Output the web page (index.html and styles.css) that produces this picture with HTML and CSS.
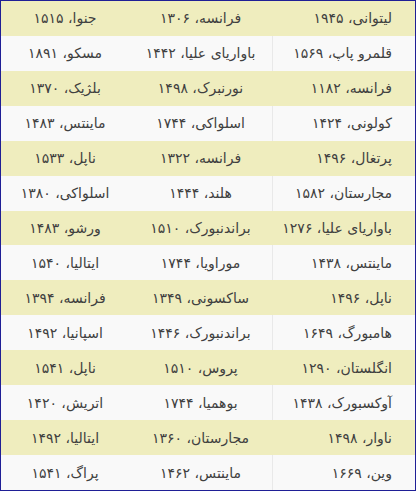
FILE: index.html
```html
<!DOCTYPE html>
<html lang="fa" dir="rtl">
<head>
<meta charset="utf-8">
<link rel="stylesheet" href="styles.css">
</head>
<body>
<div class="table">
  <div class="row odd"><div class="cell first">لیتوانی، ۱۹۴۵</div><div class="cell">فرانسه، ۱۳۰۶</div><div class="cell">جنوا، ۱۵۱۵</div></div>
  <div class="row"><div class="cell first">قلمرو پاپ، ۱۵۶۹</div><div class="cell">باواریای علیا، ۱۴۴۲</div><div class="cell">مسکو، ۱۸۹۱</div></div>
  <div class="row odd"><div class="cell first">فرانسه، ۱۱۸۲</div><div class="cell">نورنبرک، ۱۴۹۸</div><div class="cell">بلژیک، ۱۳۷۰</div></div>
  <div class="row"><div class="cell first">کولونی، ۱۴۲۴</div><div class="cell">اسلواکی، ۱۷۴۴</div><div class="cell">ماینتس، ۱۴۸۳</div></div>
  <div class="row odd"><div class="cell first">پرتغال، ۱۴۹۶</div><div class="cell">فرانسه، ۱۳۲۲</div><div class="cell">ناپل، ۱۵۳۳</div></div>
  <div class="row"><div class="cell first">مجارستان، ۱۵۸۲</div><div class="cell">هلند، ۱۴۴۴</div><div class="cell">اسلواکی، ۱۳۸۰</div></div>
  <div class="row odd"><div class="cell first">باواریای علیا، ۱۲۷۶</div><div class="cell">براندنبورک، ۱۵۱۰</div><div class="cell">ورشو، ۱۴۸۳</div></div>
  <div class="row"><div class="cell first">ماینتس، ۱۴۳۸</div><div class="cell">موراویا، ۱۷۴۴</div><div class="cell">ایتالیا، ۱۵۴۰</div></div>
  <div class="row odd"><div class="cell first">ناپل، ۱۴۹۶</div><div class="cell">ساکسونی، ۱۳۴۹</div><div class="cell">فرانسه، ۱۳۹۴</div></div>
  <div class="row"><div class="cell first">هامبورگ، ۱۶۴۹</div><div class="cell">براندنبورک، ۱۴۴۶</div><div class="cell">اسپانیا، ۱۴۹۲</div></div>
  <div class="row odd"><div class="cell first">انگلستان، ۱۲۹۰</div><div class="cell">پروس، ۱۵۱۰</div><div class="cell">ناپل، ۱۵۴۱</div></div>
  <div class="row"><div class="cell first">آوکسبورک، ۱۴۳۸</div><div class="cell">بوهمیا، ۱۷۴۴</div><div class="cell">اتریش، ۱۴۲۰</div></div>
  <div class="row odd"><div class="cell first">ناوار، ۱۴۹۸</div><div class="cell">مجارستان، ۱۳۶۰</div><div class="cell">ایتالیا، ۱۴۹۲</div></div>
  <div class="row"><div class="cell first">وین، ۱۶۶۹</div><div class="cell">ماینتس، ۱۴۶۲</div><div class="cell">پراگ، ۱۵۴۱</div></div>
</div>
</body>
</html>
```

FILE: styles.css
```css
html, body {
  margin: 0;
  padding: 0;
  background: #ffffff;
}
.table {
  box-sizing: border-box;
  width: 416px;
  height: 491px;
  border: 1px solid #1f1f96;
  display: grid;
  grid-auto-rows: 1fr;
  direction: rtl;
  font-family: "DejaVu Sans", sans-serif;
  font-size: 14px;
  color: #404040;
}
.row {
  display: grid;
  grid-template-columns: 143px 143px 1fr;
  background: #f9f9f9;
}
.row.odd {
  background: #efedbe;
}
.cell {
  display: flex;
  align-items: center;
  justify-content: center;
  white-space: nowrap;
}
.cell.first {
  justify-content: flex-start;
  padding-right: 23px;
  border-left: 1px solid #e9e9e9;
}
.row.odd .cell.first {
  border-left-color: #efedbe;
}
```
